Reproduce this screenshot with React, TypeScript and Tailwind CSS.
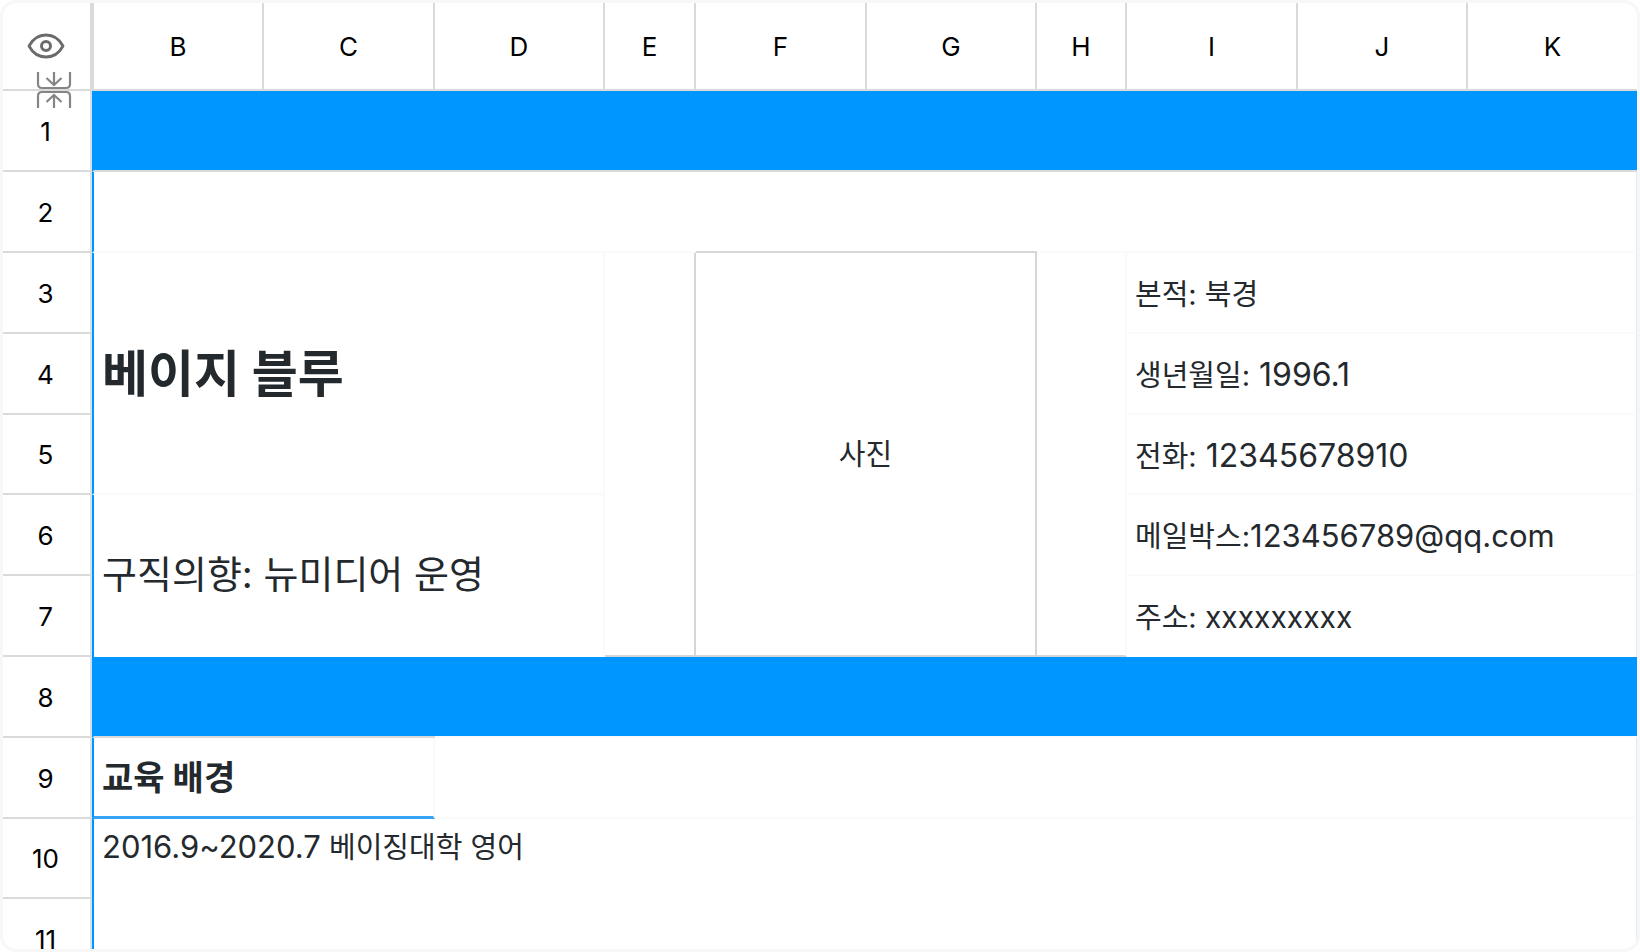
import type { ReactNode } from "react";

const columns = ["B", "C", "D", "E", "F", "G", "H", "I", "J", "K"];

const contacts = [
  { row: 4, label: "생년월일:", value: " 1996.1" },
  { row: 5, label: "전화:", value: " 12345678910" },
];

function RowHeader({ children, short }: { children: ReactNode; short?: boolean }) {
  return (
    <th
      scope="row"
      className={`${short ? "h-20" : "h-[81px]"} border-r-2 border-b-2 border-r-[#d4e2ee] border-b-[#dadada] pt-0.5 pr-0.5 pb-0 pl-0 text-center text-[26px] leading-8 font-normal text-black`}
    >
      {children}
    </th>
  );
}

type InfoCellProps = {
  label: string;
  value?: string;
  size?: string;
  last?: boolean;
};

function InfoCell({ label, value, size = "text-[32px]", last }: InfoCellProps) {
  return (
    <td
      colSpan={3}
      className={`border-r border-b-2 border-r-[#d9ecfd] ${last ? "border-b-white" : "border-b-[#fafafa]"} pt-1 pb-0 pl-2 text-[29px] leading-10`}
    >
      {label}
      {value && <span className={`${size} whitespace-pre`}>{value}</span>}
    </td>
  );
}

function EyeIcon() {
  return (
    <svg width="38" height="28" viewBox="0 0 38 28" fill="none" stroke="#6b6b6b" strokeWidth="2.8">
      <path d="M2 14C6 6.500 12 3 19 3s13 3.500 17 11c-4 7.500-10 11-17 11S6 21.500 2 14Z" strokeLinejoin="round" />
      <circle cx="19" cy="14" r="4.500" strokeWidth="3" />
    </svg>
  );
}

function CollapseIcon() {
  return (
    <svg width="36" height="38" viewBox="0 0 36 38" fill="none" stroke="#858585" strokeWidth="2.2">
      <path d="M2 1v12q0 4 4 4h24q4 0 4-4V1" />
      <path d="M2 37V25q0-4 4-4h24q4 0 4 4v12" />
      <path d="M18 1v13M10.500 7l7.500 7 7.500-7" />
      <path d="M18 37V24M10.500 31l7.500-7 7.500 7" />
    </svg>
  );
}

export default function App() {
  return (
    <main className="h-screen overflow-hidden rounded-2xl border-[3px] border-[#f7f7f7] bg-white font-['Inter','Noto_Sans_CJK_KR',sans-serif] text-[#24292d]">
      <table className="w-full table-fixed border-separate border-spacing-0 text-left">
        <colgroup>
          <col className="w-[89px]" />
          <col className="w-[172px]" />
          <col className="w-[171px]" />
          <col className="w-[170px]" />
          <col className="w-[91px]" />
          <col className="w-[171px]" />
          <col className="w-[170px]" />
          <col className="w-[90px]" />
          <col className="w-[171px]" />
          <col className="w-[170px]" />
          <col />
        </colgroup>

        <thead>
          <tr>
            <td className="relative h-[88px] border-r-2 border-b-2 border-[#dadada] py-0 pr-0.5 pl-0">
              <button type="button" aria-label="보기" className="mx-auto block">
                <EyeIcon />
              </button>
              {/* Hidden rows marker sits on the border below the corner */}
              <button type="button" aria-label="행 접기" className="absolute top-[68px] left-[33px]">
                <CollapseIcon />
              </button>
            </td>
            {columns.map((name) => (
              <th
                key={name}
                scope="col"
                className="border-r-2 border-b-2 border-[#dadada] px-0 pt-0.5 pb-0 text-center text-[26px] leading-8 font-normal text-black first-of-type:border-l-2 last:border-r-0"
              >
                {name}
              </th>
            ))}
          </tr>
        </thead>

        <tbody>
          <tr>
            <RowHeader>1</RowHeader>
            <td colSpan={10} className="border-b-2 border-l-2 border-b-[#dadada] border-l-[#0096ff] bg-[#0096ff] bg-clip-padding" />
          </tr>
          <tr>
            <RowHeader>2</RowHeader>
            <td colSpan={4} className="border-b-2 border-l-2 border-b-[#fafafa] border-l-[#0096ff]" />
            <td colSpan={2} className="border-b-2 border-[#d6d6d6]" />
            <td colSpan={4} className="border-r border-b-2 border-r-[#d9ecfd] border-b-[#fafafa]" />
          </tr>

          {/* Profile */}
          <tr>
            <RowHeader>3</RowHeader>
            <td
              colSpan={3}
              rowSpan={3}
              className="border-r-2 border-b-2 border-l-2 border-r-[#fafafa] border-b-[#fafafa] border-l-[#0096ff] pt-0.5 pb-0 pl-2"
            >
              <h1 className="text-[50px] leading-none font-bold">베이지 블루</h1>
            </td>
            <td rowSpan={5} className="border-r-2 border-b-2 border-[#d6d6d6]" />
            <td rowSpan={5} colSpan={2} className="border-r-2 border-b-2 border-[#d6d6d6] px-0 pt-0.5 pb-0 text-center text-[29px] leading-10">
              사진
            </td>
            <td rowSpan={5} className="border-r-2 border-b-2 border-r-[#fafafa] border-b-[#d6d6d6]" />
            <InfoCell label="본적: 북경" />
          </tr>
          {contacts.map((item) => (
            <tr key={item.row}>
              <RowHeader short={item.row === 5}>{item.row}</RowHeader>
              <InfoCell label={item.label} value={item.value} />
            </tr>
          ))}
          <tr>
            <RowHeader>6</RowHeader>
            <td
              colSpan={3}
              rowSpan={2}
              className="border-r-2 border-l-2 border-r-[#fafafa] border-l-[#0096ff] pt-0 pb-1 pl-2 text-[38px] leading-none"
            >
              구직의향: 뉴미디어 운영
            </td>
            <InfoCell label="메일박스:" value="123456789@qq.com" size="text-[31px]" />
          </tr>
          <tr>
            <RowHeader>7</RowHeader>
            <InfoCell label="주소: " value="xxxxxxxxx" size="text-3xl" last />
          </tr>
          <tr>
            <RowHeader>8</RowHeader>
            <td colSpan={2} className="border-b-2 border-l-2 border-b-[#dadada] border-l-[#0096ff] bg-[#0096ff] bg-clip-padding" />
            <td colSpan={8} className="border-b-2 border-b-[#fafafa] bg-[#0096ff] bg-clip-padding" />
          </tr>

          {/* Education */}
          <tr>
            <RowHeader>9</RowHeader>
            <td colSpan={2} className="border-r-2 border-b-3 border-l-2 border-r-[#fafafa] border-b-[#35a4f5] border-l-[#0096ff] pt-0.5 pb-0 pl-2">
              <h2 className="text-[34px] leading-10 font-bold">교육 배경</h2>
            </td>
            <td colSpan={8} className="border-r border-b-2 border-r-[#d9ecfd] border-b-[#fafafa]" />
          </tr>
          <tr>
            <RowHeader short>10</RowHeader>
            <td
              colSpan={10}
              rowSpan={2}
              className="border-r border-l-2 border-r-[#d9ecfd] border-l-[#0096ff] pt-2 pl-2 align-top text-[29px] leading-10"
            >
              <span className="text-[31px]">2016.9~2020.7</span> 베이징대학 영어
            </td>
          </tr>
          <tr>
            <RowHeader>11</RowHeader>
          </tr>
        </tbody>
      </table>
    </main>
  );
}
